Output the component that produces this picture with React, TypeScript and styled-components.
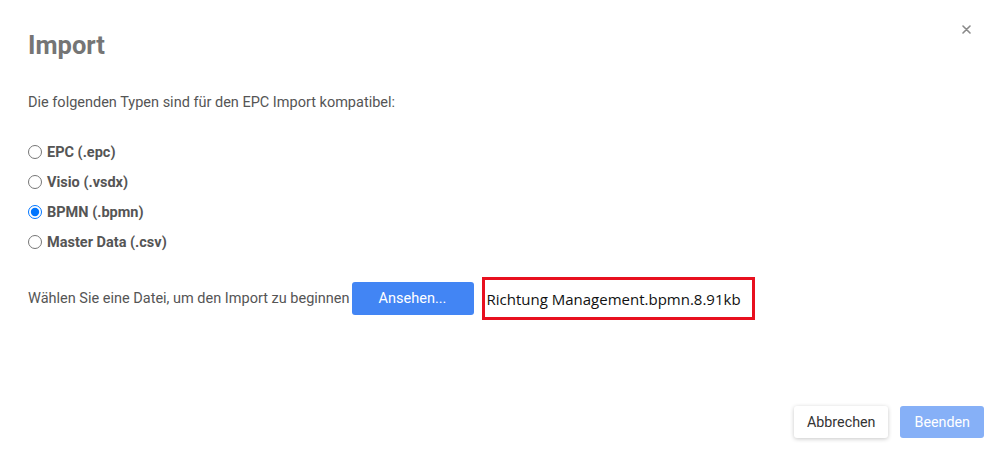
import styled, { createGlobalStyle } from "styled-components";

const GlobalStyle = createGlobalStyle`
  html, body {
    margin: 0;
    padding: 0;
    background: #ffffff;
  }
  * {
    box-sizing: border-box;
  }
`;

const Dialog = styled.div`
  position: relative;
  display: flex;
  flex-direction: column;
  width: 1000px;
  height: 455px;
  padding: 29px 16px 17px 28px;
  background: #ffffff;
  font-family: Roboto, "Liberation Sans", Arial, sans-serif;
`;

const CloseButton = styled.button`
  position: absolute;
  top: 23px;
  right: 28px;
  width: 12px;
  height: 12px;
  padding: 0;
  border: none;
  background: transparent;
  display: flex;
  align-items: center;
  justify-content: center;
  cursor: pointer;
`;

const Title = styled.h1`
  margin: 0;
  font-size: 25.5px;
  line-height: 32px;
  font-weight: 700;
  color: #757575;
`;

const Description = styled.p`
  margin: 32px 0 0;
  font-size: 14.5px;
  line-height: 20px;
  color: #555555;
`;

const RadioList = styled.div`
  display: flex;
  flex-direction: column;
  margin-top: 24px;
`;

const RadioRow = styled.label`
  display: flex;
  align-items: center;
  height: 30px;
  font-size: 14.5px;
  font-weight: 700;
  color: #555555;
  cursor: pointer;
`;

const RadioInput = styled.input`
  width: 14px;
  height: 14px;
  margin: 0 5px 0 0;
  accent-color: #0075ff;
`;

const FileRow = styled.div`
  display: flex;
  align-items: center;
  margin-top: 20px;
  height: 43px;
`;

const FileHint = styled.span`
  font-size: 14.5px;
  color: #555555;
`;

const BrowseButton = styled.button`
  margin-left: 2px;
  width: 122px;
  height: 33px;
  border: none;
  border-radius: 3px;
  background: #4285f4;
  color: #ffffff;
  font-family: Roboto, "Liberation Sans", Arial, sans-serif;
  font-size: 14.5px;
  cursor: pointer;
`;

const FileName = styled.div`
  display: flex;
  align-items: center;
  margin-left: 8px;
  height: 43px;
  padding: 0 11px 0 2px;
  border: 3px solid #e8101f;
  font-family: "Open Sans", "Noto Sans", sans-serif;
  font-size: 15px;
  color: #111111;
  white-space: nowrap;
`;

const Footer = styled.div`
  display: flex;
  justify-content: flex-end;
  gap: 12px;
  margin-top: auto;
`;

const FooterButton = styled.button<{ $primary?: boolean }>`
  height: 32px;
  padding: 0 ${(p) => (p.$primary ? "14px" : "13px")};
  border: none;
  border-radius: 3px;
  font-family: Roboto, "Liberation Sans", Arial, sans-serif;
  font-size: 14.3px;
  color: ${(p) => (p.$primary ? "#ffffff" : "#333333")};
  background: ${(p) => (p.$primary ? "#86b0f7" : "#ffffff")};
  box-shadow: ${(p) =>
    p.$primary ? "none" : "0 1px 4px rgba(0, 0, 0, 0.22)"};
  cursor: pointer;
`;

const types = [
  { id: "epc", label: "EPC (.epc)" },
  { id: "vsdx", label: "Visio (.vsdx)" },
  { id: "bpmn", label: "BPMN (.bpmn)" },
  { id: "csv", label: "Master Data (.csv)" },
];

export default function App() {
  return (
    <>
      <GlobalStyle />
      <Dialog>
        <CloseButton aria-label="Schließen">
          <svg width="9" height="9" viewBox="0 0 9 9">
            <path
              d="M1 1L8 8M8 1L1 8"
              stroke="#8a8a8a"
              strokeWidth="1.6"
              strokeLinecap="round"
            />
          </svg>
        </CloseButton>
        <Title>Import</Title>
        <Description>
          Die folgenden Typen sind für den EPC Import kompatibel:
        </Description>
        <RadioList>
          {types.map((t) => (
            <RadioRow key={t.id}>
              <RadioInput
                type="radio"
                name="importType"
                defaultChecked={t.id === "bpmn"}
              />
              {t.label}
            </RadioRow>
          ))}
        </RadioList>
        <FileRow>
          <FileHint>Wählen Sie eine Datei, um den Import zu beginnen</FileHint>
          <BrowseButton>Ansehen...</BrowseButton>
          <FileName>Richtung Management.bpmn.8.91kb</FileName>
        </FileRow>
        <Footer>
          <FooterButton>Abbrechen</FooterButton>
          <FooterButton $primary>Beenden</FooterButton>
        </Footer>
      </Dialog>
    </>
  );
}
